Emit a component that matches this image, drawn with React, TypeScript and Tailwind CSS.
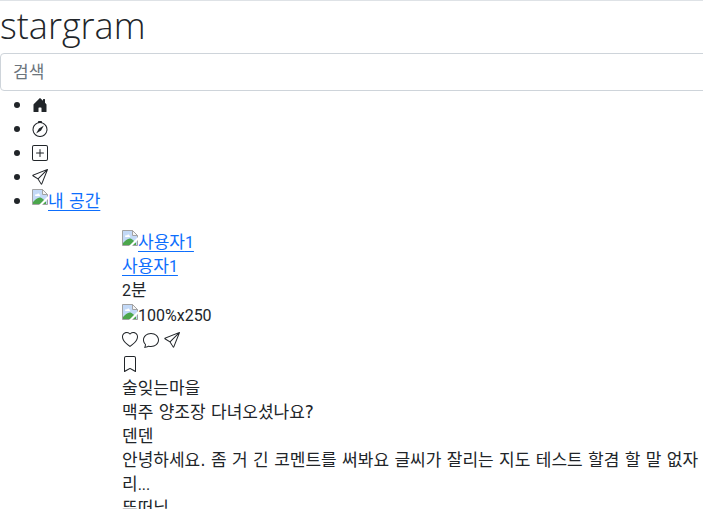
import type { ReactNode } from 'react';
import {
  BsBookmark,
  BsChat,
  BsCompass,
  BsHeart,
  BsHouseDoorFill,
  BsPlusSquare,
  BsSend,
} from 'react-icons/bs';

const korean = 'font-["DejaVu_Sans","Noto_Sans_CJK_KR",sans-serif] text-[17px]';
const latin = 'font-["Roboto","Noto_Sans_CJK_KR",sans-serif] text-[16px]';

function Latin({ children }: { children: string }) {
  return <span className={`leading-none ${latin}`}>{children}</span>;
}

function MissingImage({ label, children, linked = false }: { label: string; children?: ReactNode; linked?: boolean }) {
  return (
    <span role="img" aria-label={label} className="flex h-6 items-start">
      <svg width="16" height="16" viewBox="0 0 16 16" aria-hidden="true">
        <path d="M.5.5h10l5 5v10H.5z" fill="#c3d9f7" stroke="#a3a3a3" />
        <path d="M3 6.500c0-1.200 1.200-1.700 2-1 .5-1.500 2.500-1 2.500.3 1 .1 1 1.200 0 1.200H3.500z" fill="#fff" />
        <path d="M1 15v-2C3 10.500 6 8 8.500 8.500c2 .5 3.500 2.500 5.500 4.500v2z" fill="#4ca64c" />
        <path d="M16 7v3l-6 6H7z" fill="#fff" />
        <path d="M10.500.5v5h5z" fill="#f5f5f5" stroke="#a3a3a3" />
      </svg>
      <span className={linked ? 'underline underline-offset-3' : ''}>{children ?? label}</span>
    </span>
  );
}

function NavItem({ label, children }: { label: string; children: ReactNode }) {
  return (
    <li className="flex h-6 items-center gap-3 before:size-1.5 before:rounded-full before:bg-[#212529]">
      <a href="#" aria-label={label}>
        {children}
      </a>
    </li>
  );
}

export default function App() {
  return (
    <div className={`h-screen overflow-hidden border-t border-[#dee2e6] bg-white leading-6 text-[#212529] ${korean}`}>
      <div className="min-w-[935px]">
        <header>
          <h1 className="mb-[3px] pt-px font-['Open_Sans',sans-serif] text-4xl leading-[48px] font-light">stargram</h1>
          <input
            type="search"
            aria-label="검색"
            placeholder="검색"
            className="block h-[38px] w-full rounded-sm border border-[#ced4da] bg-white px-3 placeholder:text-[#6c757d]"
          />
          <nav className="mt-0.5">
            <ul className="mb-[17px] pl-3.5">
              <NavItem label="홈"><BsHouseDoorFill className="size-4" /></NavItem>
              <NavItem label="탐색"><BsCompass className="size-4" /></NavItem>
              <NavItem label="추가"><BsPlusSquare className="size-4" /></NavItem>
              <NavItem label="메시지"><BsSend className="size-4" /></NavItem>
              <NavItem label="내 공간">
                <span className="text-[#0d6efd]"><MissingImage label="내 공간" linked /></span>
              </NavItem>
            </ul>
          </nav>
        </header>
        <main className="pl-[122px]">
          <article>
            <a href="#" className="flex text-[#0d6efd]">
              <MissingImage label="사용자1" linked>사용자<Latin>1</Latin></MissingImage>
            </a>
            <div>
              <a href="#" className="text-[#0d6efd] underline underline-offset-3">
                사용자<Latin>1</Latin>
              </a>
            </div>
            <div><Latin>2</Latin>분</div>
            <div className={`mt-0.5 ${latin}`}><MissingImage label="100%x250" /></div>
            <div className="flex h-6 items-center gap-[5px]">
              <button type="button" aria-label="좋아요"><BsHeart className="size-4" /></button>
              <button type="button" aria-label="댓글"><BsChat className="size-4" /></button>
              <button type="button" aria-label="공유"><BsSend className="size-4" /></button>
            </div>
            <div className="flex h-6 items-center">
              <button type="button" aria-label="저장"><BsBookmark className="size-4" /></button>
            </div>
            <div>술잊는마을</div>
            <div>맥주 양조장 다녀오셨나요?</div>
            <div>덴덴</div>
            <p className="whitespace-nowrap">
              안녕하세요. 좀 거 긴 코멘트를 써봐요 글씨가 잘리는 지도 테스트 할겸 할 말 없자
              <br />
              리<Latin>...</Latin>
            </p>
            <div>뚜떠님</div>
          </article>
        </main>
      </div>
    </div>
  );
}
